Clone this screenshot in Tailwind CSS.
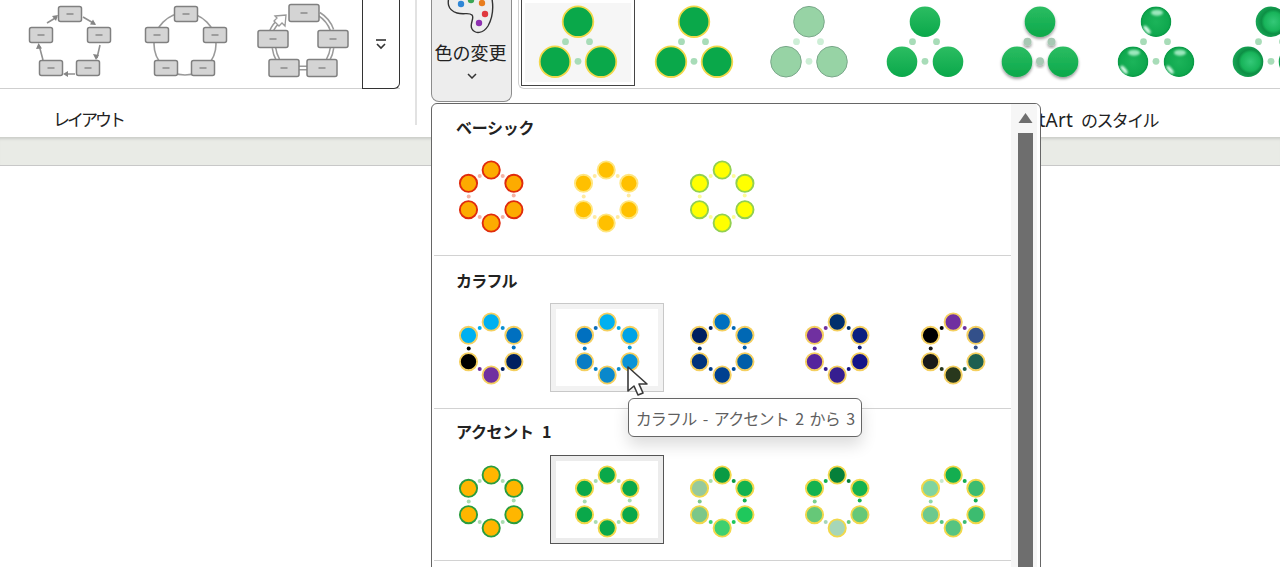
<!DOCTYPE html>
<html lang="ja">
<head>
    <meta charset="UTF-8">
    <title>SmartArt 色の変更</title>
    <script src="https://cdn.jsdelivr.net/npm/@tailwindcss/browser@4"></script>
</head>
<body class="bg-white">
<div class="relative w-[1280px] h-[567px] overflow-hidden bg-white text-[#222] font-['Noto_Sans_CJK_JP',sans-serif]">

    <svg class="absolute w-0 h-0">
        <defs>
            <radialGradient id="gloss" cx="50%" cy="50%" r="52%">
                <stop offset="0" stop-color="#1cb45a"/>
                <stop offset="0.8" stop-color="#0fa84e"/>
                <stop offset="0.93" stop-color="#0a9a46"/>
                <stop offset="1" stop-color="#a6f0cc"/>
            </radialGradient>
            <radialGradient id="ringed" cx="58%" cy="50%" r="55%">
                <stop offset="0" stop-color="#34c878"/>
                <stop offset="0.55" stop-color="#18b45a"/>
                <stop offset="0.72" stop-color="#0d8f45"/>
                <stop offset="1" stop-color="#17a354"/>
            </radialGradient>
            <linearGradient id="matte" x1="0" y1="0" x2="0" y2="1">
                <stop offset="0" stop-color="#2cbd62"/>
                <stop offset="1" stop-color="#0aa84a"/>
            </linearGradient>
            <filter id="soft" x="-30%" y="-30%" width="160%" height="170%">
                <feDropShadow dx="0" dy="2" stdDeviation="1.8" flood-color="#000" flood-opacity="0.4"/>
            </filter>
            <filter id="blur1" x="-50%" y="-50%" width="200%" height="200%">
                <feGaussianBlur stdDeviation="1"/>
            </filter>
        </defs>
    </svg>

    <!-- Ribbon -->
    <div class="flex h-[137px]">
        <!-- Layout group -->
        <div class="w-[417px] h-[125px] border-r-2 border-[#e2e2e2]">
            <div class="flex h-[89px] w-[400px] pl-[12px] border-b border-[#cfcfcf]">
                <svg id="layout1" class="w-[116px] h-[88px]" viewBox="0 0 116 88"></svg>
                <svg id="layout2" class="w-[116px] h-[88px]" viewBox="0 0 116 88"></svg>
                <svg id="layout3" class="w-[118px] h-[88px]" viewBox="0 0 118 88"></svg>
                <div class="flex items-center justify-center w-[38px] h-[89px] border-x border-b border-[#333] rounded-br-md bg-white">
                    <svg class="w-[12px] h-[12px]" viewBox="0 0 12 12" fill="none" stroke="#333" stroke-width="1.6">
                        <path d="M1 2h10"/>
                        <path d="M2 6l4 4 4-4"/>
                    </svg>
                </div>
            </div>
            <div class="pl-[53px] pt-[17px] text-[17px] leading-[26px] tracking-[-3px]">レイアウト</div>
        </div>

        <!-- Change colours button -->
        <div class="relative ml-[14px] flex flex-col items-center w-[81px] h-[102px] bg-[#ededed] border border-t-0 border-[#8c8c8c] rounded-b-lg">
            <svg class="w-[60px] h-[38px]" viewBox="3 0 60 38" fill="none">
                <path d="M11-6C8 2 8 10 18 13c7 2 12-1 15 2s-3 9 0 14 11 5 16-3c5-9 6-20 3-32" stroke="#333" stroke-width="1.4"/>
                <circle cx="22" cy="4" r="3.2" fill="#2f86d6"/>
                <circle cx="32" cy="0" r="3.2" fill="#3aa655"/>
                <circle cx="43" cy="3" r="3.2" fill="#e87d1e"/>
                <circle cx="46" cy="14" r="3.2" fill="#e0393e"/>
                <circle cx="40" cy="23" r="3.2" fill="#8e2fb0"/>
            </svg>
            <div class="mt-[1px] -ml-[2px] text-[18px] leading-[26px] whitespace-nowrap">色の変更</div>
            <svg class="mt-[8px] w-[10px] h-[6px]" viewBox="0 0 10 6" fill="none" stroke="#333" stroke-width="1.5">
                <path d="M1 1l4 4 4-4"/>
            </svg>
        </div>

        <!-- Style gallery -->
        <div class="ml-[6px] flex-1 min-w-0">
            <div id="gallery" class="flex h-[89px] pl-[2px] border-l border-b border-[#cfcfcf] rounded-bl-md"></div>
            <div class="pt-[18px] pr-[122px] text-right text-[17px] leading-[26px] whitespace-nowrap"><span class="text-[19px] font-['Noto_Sans',sans-serif] tracking-[0.2px]">SmartArt</span><span class="ml-[8px] tracking-[-1.6px]">のスタイル</span></div>
        </div>
    </div>

    <!-- Grey strip under the ribbon -->
    <div class="h-[29px] bg-[#e9ebe6] border-b border-[#c8c8c8] shadow-[inset_0_4px_3px_-2px_rgba(0,0,0,0.13)]"></div>

    <!-- Colour dropdown -->
    <div class="absolute left-[431px] top-[103px] flex w-[610px] h-[480px] bg-white border-[1.5px] border-[#666] rounded-t-md">
        <div class="w-[579px]">
            <section class="h-[152px] ml-[2px] pt-[11.5px] border-b-[1.5px] border-[#d2d2d2]">
                <h3 class="pl-[22px] mb-[12px] h-[23px] text-[16px] leading-[23px] font-bold tracking-[-0.3px]">ベーシック</h3>
                <div class="-ml-[1px] grid grid-cols-[repeat(5,115.5px)]">
                    <div class="ring-cell flex items-center justify-center h-[89px]" data-row="basic" data-i="0"></div>
                    <div class="ring-cell flex items-center justify-center h-[89px]" data-row="basic" data-i="1"></div>
                    <div class="ring-cell flex items-center justify-center h-[89px]" data-row="basic" data-i="2"></div>
                </div>
            </section>
            <section class="h-[152.5px] ml-[2px] pt-[13px] border-b-[1.5px] border-[#d2d2d2]">
                <h3 class="pl-[22px] mb-[10.5px] h-[23px] text-[16px] leading-[23px] font-bold tracking-[-0.8px]">カラフル</h3>
                <div class="-ml-[1px] grid grid-cols-[repeat(5,115.5px)]">
                    <div class="ring-cell flex items-center justify-center h-[89px]" data-row="colorful" data-i="0"></div>
                    <div class="ring-cell flex items-center justify-center h-[89px] w-[114px] ml-[1px] bg-white border-[1.5px] border-[#c8c8c8] shadow-[inset_0_0_0_5px_#f2f2f2]" data-row="colorful" data-i="1"></div>
                    <div class="ring-cell flex items-center justify-center h-[89px]" data-row="colorful" data-i="2"></div>
                    <div class="ring-cell flex items-center justify-center h-[89px]" data-row="colorful" data-i="3"></div>
                    <div class="ring-cell flex items-center justify-center h-[89px]" data-row="colorful" data-i="4"></div>
                </div>
            </section>
            <section class="h-[152.5px] ml-[2px] pt-[11.5px] border-b-[1.5px] border-[#d2d2d2]">
                <h3 class="pl-[22px] mb-[12px] h-[23px] text-[16px] leading-[23px] font-bold tracking-[-0.3px] [word-spacing:5px]">アクセント 1</h3>
                <div class="-ml-[1px] grid grid-cols-[repeat(5,115.5px)]">
                    <div class="ring-cell flex items-center justify-center h-[89px]" data-row="accent" data-i="0"></div>
                    <div class="ring-cell flex items-center justify-center h-[89px] w-[114px] ml-[1px] bg-white border-[1.5px] border-[#555] shadow-[inset_0_0_0_5px_#ececec]" data-row="accent" data-i="1"></div>
                    <div class="ring-cell flex items-center justify-center h-[89px]" data-row="accent" data-i="2"></div>
                    <div class="ring-cell flex items-center justify-center h-[89px]" data-row="accent" data-i="3"></div>
                    <div class="ring-cell flex items-center justify-center h-[89px]" data-row="accent" data-i="4"></div>
                </div>
            </section>
        </div>

        <!-- Scrollbar -->
        <div class="flex flex-col items-center w-[26px] pl-[2px] bg-[#f6f6f6]">
            <svg class="mt-[8px] w-[15px] h-[12px]" viewBox="0 0 15 12"><path d="M7.5 1L14.5 11H.5z" fill="#6e6e6e"/></svg>
            <div class="mt-[9px] w-[15px] h-[440px] bg-[#6e6e6e]"></div>
        </div>
    </div>

    <!-- Tooltip -->
    <div class="absolute left-[628px] top-[398px] flex items-center justify-center w-[234px] h-[39px] bg-white border-[1.5px] border-[#666] rounded-md shadow-[0_8px_16px_rgba(0,0,0,0.14)] text-[16px] text-[#5f5f5f] tracking-[-0.8px] [word-spacing:3.5px] whitespace-nowrap">カラフル - アクセント 2 から 3</div>

    <!-- Mouse pointer -->
    <svg class="absolute left-[625px] top-[364px] w-[26px] h-[34px]" viewBox="0 0 26 34">
        <path d="M3 3v24l6-5 4 9 5-2-4-9h8z" fill="#fff" stroke="#3a3a3a" stroke-width="1.6" stroke-linejoin="round"/>
    </svg>
</div>

<script>
    // order: top, upper right, lower right, bottom, lower left, upper left
    const rings = {
        basic: [
            { fill: Array(6).fill('#fdab00'), stroke: '#e02b0c', dots: Array(6).fill('#f6b3a6') },
            { fill: Array(6).fill('#ffc000'), stroke: '#ffe680', dots: Array(6).fill('#ffeaa0') },
            { fill: Array(6).fill('#ffff00'), stroke: '#92d050', dots: Array(6).fill('#fdfc99') },
        ],
        colorful: [
            { fill: ['#00b0f0', '#0070c0', '#002060', '#7030a0', '#000000', '#00b0f0'], stroke: '#f5d060', dots: ['#0a8fd0', '#0070c0', '#002060', '#7030a0', '#000000', '#00b0f0'] },
            { fill: ['#00b0f0', '#00a3e6', '#0a93d6', '#0a88cc', '#0a7cc4', '#0070c0'], stroke: '#f5d060', dots: ['#00a8e8', '#0a96d8', '#0a8ccf', '#0a82c8', '#0676c2', '#0a6cb8'] },
            { fill: ['#0070c0', '#0068b4', '#005ea8', '#004090', '#00337c', '#002060'], stroke: '#f5d060', dots: ['#0068b4', '#005ea8', '#004c9c', '#003a88', '#002f70', '#002060'] },
            { fill: ['#002f6c', '#0b1f80', '#141488', '#361e90', '#55259c', '#7030a0'], stroke: '#f5d060', dots: ['#002f6c', '#0b1f80', '#141488', '#361e90', '#55259c', '#7030a0'] },
            { fill: ['#7030a0', '#33508a', '#1d5f50', '#28381d', '#1a1a18', '#000000'], stroke: '#f5d060', dots: ['#7030a0', '#33508a', '#1d5f50', '#28381d', '#1a1a18', '#000000'] },
        ],
        accent: [
            { fill: Array(6).fill('#ffb600'), stroke: '#2a9d3e', dots: Array(6).fill('#a8dcb0') },
            { fill: Array(6).fill('#0aa84a'), stroke: '#f2d84a', dots: Array(6).fill('#a8dcb0') },
            { fill: ['#0a9b44', '#14b24f', '#1fc85c', '#3ed06f', '#7bc789', '#96c99c'], stroke: '#f2d84a', dots: ['#0a9b44', '#14b24f', '#1fc85c', '#3ed06f', '#7bc789', '#a8dcb0'] },
            { fill: ['#06803a', '#14b24f', '#66c878', '#a6d6b8', '#66c878', '#14b24f'], stroke: '#f2d84a', dots: ['#06803a', '#14b24f', '#66c878', '#a6d6b8', '#7bd08c', '#14b24f'] },
            { fill: ['#14ae50', '#3cbc70', '#3cbc70', '#55c480', '#6cc98e', '#80d4a0'], stroke: '#f2d84a', dots: ['#14ae50', '#14ae50', '#3cbc70', '#55c480', '#8fd8a8', '#c8e8d0'] },
        ],
    };

    const circlePos = [[0, -26.5], [22.7, -13.2], [22.7, 13.2], [0, 26.5], [-22.7, 13.2], [-22.7, -13.2]];
    const dotPos = [[11.5, -20.5], [22.5, -1], [11.5, 20.5], [-11.5, 20.5], [-22.5, 0], [-11.5, -20.5]];

    function ringSvg(r) {
        let s = '<svg class="shrink-0" width="80" height="80" viewBox="-40.2 -41.5 80 80">';
        dotPos.forEach((p, i) => { s += `<circle cx="${p[0]}" cy="${p[1]}" r="2" fill="${r.dots[i]}"/>`; });
        circlePos.forEach((p, i) => { s += `<circle cx="${p[0]}" cy="${p[1]}" r="8.6" fill="${r.fill[i]}" stroke="${r.stroke}" stroke-width="1.9"/>`; });
        return s + '</svg>';
    }

    document.querySelectorAll('.ring-cell').forEach(el => {
        el.innerHTML = ringSvg(rings[el.dataset.row][+el.dataset.i]);
    });

    // Top gallery: three circle SmartArt styles
    const styles = [
        { fill: '#0aa84a', stroke: '#f2d84a', sw: 1.8, dot: '#a8dcb8' },
        { fill: '#0aa84a', stroke: '#f2d84a', sw: 1.8, dot: '#a8dcb8' },
        { fill: '#97d3a5', stroke: '#7aa88a', sw: 1, dot: '#cdeed6' },
        { fill: 'url(#matte)', stroke: 'none', sw: 0, dot: '#a8dcb8' },
        { fill: 'url(#matte)', stroke: 'none', sw: 0, dot: '#a8c8b4', shadow: true },
        { fill: 'url(#gloss)', stroke: 'none', sw: 0, dot: '#a8dcb8', gloss: true },
        { fill: 'url(#ringed)', stroke: 'none', sw: 0, dot: '#a8dcb8' },
    ];
    const gallery = document.getElementById('gallery');
    styles.forEach((st, i) => {
        const pts = [[0, 21.7], [-23, 61.7], [23, 61.7]];
        let s = '<svg width="90" height="85" viewBox="-45 0 90 85" style="overflow:visible">';
        [[-12.5, 41.7], [11.5, 41.7], [0, 61.3]].forEach(p => {
            s += `<circle cx="${p[0]}" cy="${p[1]}" r="${st.shadow ? 4 : 3.4}" fill="${st.dot}"${st.shadow ? ' filter="url(#soft)"' : ''}/>`;
        });
        pts.forEach(p => {
            s += `<circle cx="${p[0]}" cy="${p[1]}" r="15.3" fill="${st.fill}" stroke="${st.stroke}" stroke-width="${st.sw}"${st.shadow ? ' filter="url(#soft)"' : ''}/>`;
            if (st.gloss) {
                s += `<ellipse cx="${p[0] + 1}" cy="${p[1] - 9}" rx="6" ry="3" fill="#9ce8bd" filter="url(#blur1)"/>`;
                s += `<ellipse cx="${p[0] - 9}" cy="${p[1] + 8}" rx="2" ry="5" transform="rotate(-40 ${p[0] - 9} ${p[1] + 8})" fill="#d8fbe8" filter="url(#blur1)"/>`;
            }
        });
        s += '</svg>';
        const box = i === 0
            ? 'flex justify-center shrink-0 w-[114px] h-[86px] mr-[1.4px] border-[1.5px] border-t-0 border-[#444] bg-[#f6f6f6] shadow-[inset_0_0_0_3px_#ffffff]'
            : 'flex justify-center shrink-0 w-[115.4px] h-[86px]';
        gallery.insertAdjacentHTML('beforeend', `<div class="${box}">${s}</div>`);
    });

    // Layout thumbnails
    function box(cx, cy, w, h) {
        return `<rect x="${cx - w / 2}" y="${cy - h / 2}" width="${w}" height="${h}" rx="2" fill="#d4d4d4" stroke="#808080" stroke-width="1.5"/>` +
            `<path d="M${cx - 3.5} ${cy}h7" stroke="#777" stroke-width="1.2"/>`;
    }
    const boxes1 = [[58, 14], [87, 35], [76, 68], [39, 68], [29, 35]];
    document.getElementById('layout1').innerHTML =
        '<path d="M35 23l10-6 M71 17l12 7 M88 45l-3 13 M63 74H53 M31 60l-4-15" stroke="#909090" stroke-width="1.6" fill="none"/>' +
        '<path d="M46 15l-6 1 4 5z M84 25l-6-.5 3-5z M84 60l-3-6 6 1z M51 74l5-3v6z M26.5 43L24 49l6-.5z" fill="#858585"/>' +
        boxes1.map(b => box(b[0], b[1], 23, 15)).join('');

    const boxes2 = [[58, 14], [87, 35], [75, 68], [38, 68], [29, 35]];
    document.getElementById('layout2').innerHTML =
        '<circle cx="57" cy="44" r="31" fill="none" stroke="#9a9a9a" stroke-width="1.6"/>' +
        boxes2.map(b => box(b[0], b[1], 23, 15)).join('');

    const boxes3 = [[60, 13], [89, 39], [78, 68], [40, 68], [29, 39]];
    const arcs3 = 'M75 14A31 31 0 0 1 88 30 M88 48A31 31 0 0 1 84 60 M34 60A31 31 0 0 1 30 48 M27 32A31 31 0 0 1 36 20 M54 68H64';
    document.getElementById('layout3').innerHTML =
        `<path d="${arcs3}" fill="none" stroke="#9a9a9a" stroke-width="5"/><path d="${arcs3}" fill="none" stroke="#fff" stroke-width="2"/>` +
        '<path d="M31 16l11-1-1 11-3-3-3 3-5-5 3-3z" fill="#fff" stroke="#999" stroke-width="1.3"/>' +
        boxes3.map(b => box(b[0], b[1], 30, 17)).join('');
</script>
</body>
</html>
